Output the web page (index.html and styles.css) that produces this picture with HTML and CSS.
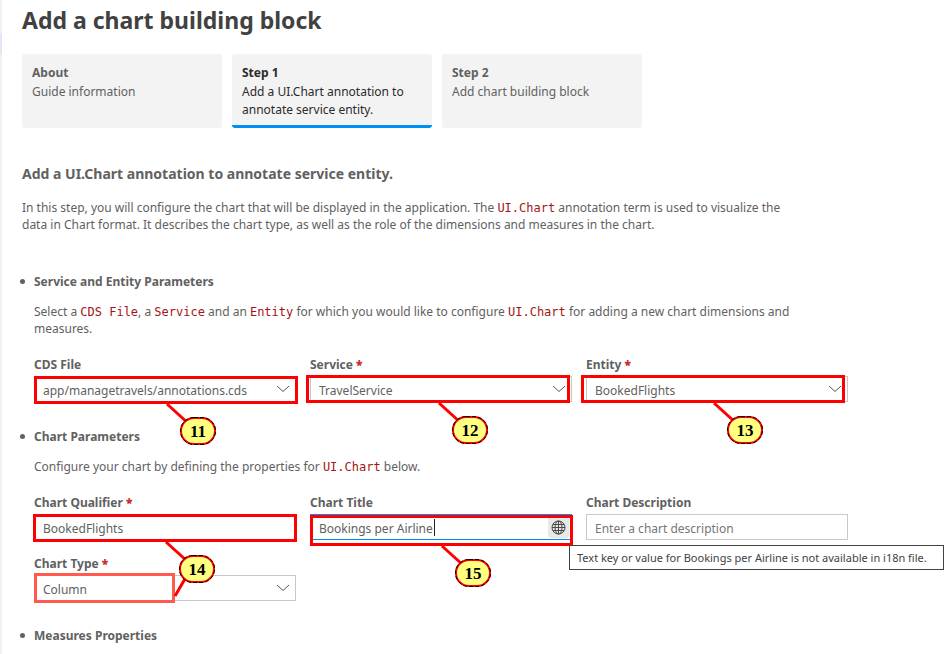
FILE: index.html
```html
<!DOCTYPE html>
<html lang="en">
<head>
<meta charset="utf-8">
<title>Add a chart building block</title>
<link rel="stylesheet" href="styles.css">
</head>
<body>
<main class="guide">
  <h1>Add a chart building block</h1>
  <nav class="steps" aria-label="Guide steps">
    <a class="step" href="#about"><strong>About</strong><span>Guide information</span></a>
    <a class="step step-active" href="#step1" aria-current="step"><strong>Step 1</strong><span>Add a UI.Chart annotation to annotate service entity.</span></a>
    <a class="step" href="#step2"><strong>Step 2</strong><span>Add chart building block</span></a>
  </nav>
  <h2>Add a UI.Chart annotation to annotate service entity.</h2>
  <p class="intro">In this step, you will configure the chart that will be displayed in the application. The <code>UI.Chart</code> annotation term is used to visualize the data in Chart format. It describes the chart type, as well as the role of the dimensions and measures in the chart.</p>

  <ul class="sections">
    <li class="section">
      <h3>Service and Entity Parameters</h3>
      <p>Select a <code>CDS File</code>, a <code>Service</code> and an <code>Entity</code> for which you would like to configure <code>UI.Chart</code> for adding a new chart dimensions and measures.</p>
      <div class="fields">
        <div class="field">
          <label for="cds">CDS File</label>
          <div class="control">
            <select id="cds"><option>app/managetravels/annotations.cds</option></select>
            <svg class="chevron" viewBox="0 0 14 8"><path d="M1 1l6 5.5L13 1"/></svg>
            <svg class="callout" viewBox="0 0 262 26">
              <rect class="frame" x="1.500" y="1.500" width="261" height="25"/>
              <path class="leader" d="M133 28l22 20"/>
              <rect class="badge" x="147" y="42" width="34" height="26" rx="13"/>
              <rect class="badge-dash" x="146.500" y="41.500" width="35" height="27" rx="13.500"/>
              <text x="164" y="61">11</text>
            </svg>
          </div>
        </div>
        <div class="field">
          <label for="service">Service <b>*</b></label>
          <div class="control">
            <select id="service"><option>TravelService</option></select>
            <svg class="chevron" viewBox="0 0 14 8"><path d="M1 1l6 5.5L13 1"/></svg>
            <svg class="callout" viewBox="0 0 262 26">
              <rect class="frame" x="-2.500" y="0.500" width="261" height="25"/>
              <path class="leader" d="M129 27l22 20"/>
              <rect class="badge" x="143" y="41" width="34" height="26" rx="13"/>
              <rect class="badge-dash" x="142.500" y="40.500" width="35" height="27" rx="13.500"/>
              <text x="160" y="60">12</text>
            </svg>
          </div>
        </div>
        <div class="field">
          <label for="entity">Entity <b>*</b></label>
          <div class="control">
            <select id="entity"><option>BookedFlights</option></select>
            <svg class="chevron" viewBox="0 0 14 8"><path d="M1 1l6 5.5L13 1"/></svg>
            <svg class="callout" viewBox="0 0 262 26">
              <rect class="frame" x="-3.500" y="0.500" width="261" height="25"/>
              <path class="leader" d="M128 27l22 20"/>
              <rect class="badge" x="142" y="41" width="34" height="26" rx="13"/>
              <rect class="badge-dash" x="141.500" y="40.500" width="35" height="27" rx="13.500"/>
              <text x="159" y="60">13</text>
            </svg>
          </div>
        </div>
      </div>
    </li>

    <li class="section">
      <h3>Chart Parameters</h3>
      <p>Configure your chart by defining the properties for <code>UI.Chart</code> below.</p>
      <div class="fields">
        <div class="field">
          <label for="qualifier">Chart Qualifier <b>*</b></label>
          <div class="control">
            <input id="qualifier" type="text" value="BookedFlights">
            <svg class="callout" viewBox="0 0 262 26">
              <rect class="frame" x="0.500" y="1.500" width="261" height="25"/>
              <path class="leader" d="M132 28l21 19M141 82l14-24"/>
              <rect class="badge" x="146" y="42" width="34" height="26" rx="13"/>
              <rect class="badge-dash" x="145.500" y="41.500" width="35" height="27" rx="13.500"/>
              <text x="163" y="61">14</text>
            </svg>
          </div>
        </div>
        <div class="field">
          <label for="title">Chart Title</label>
          <div class="control control-focus">
            <input id="title" type="text" value="Bookings per Airline">
            <span class="caret"></span>
            <button class="globe" type="button" aria-label="Translate">
              <svg viewBox="0 0 15 15"><circle cx="7.500" cy="7.500" r="6.500"/><ellipse cx="7.500" cy="7.500" rx="3.500" ry="6.500"/><path d="M7.500 1v13M1 7.500h13M2 4.500h11M2 10.500h11"/></svg>
            </button>
            <svg class="callout" viewBox="0 0 262 26">
              <rect class="frame" x="1.500" y="2.500" width="260" height="28"/>
              <path class="leader" d="M132 32l21 19"/>
              <rect class="badge" x="146" y="46" width="34" height="26" rx="13"/>
              <rect class="badge-dash" x="145.500" y="45.500" width="35" height="27" rx="13.500"/>
              <text x="163" y="65">15</text>
            </svg>
            <div class="tooltip" role="tooltip">Text key or value for Bookings per Airline is not available in i18n file.</div>
          </div>
        </div>
        <div class="field">
          <label for="description">Chart Description</label>
          <div class="control"><input id="description" type="text" placeholder="Enter a chart description"></div>
        </div>
        <div class="field">
          <label for="type">Chart Type <b>*</b></label>
          <div class="control">
            <select id="type"><option>Column</option></select>
            <svg class="chevron" viewBox="0 0 14 8"><path d="M1 1l6 5.500L13 1"/></svg>
            <svg class="callout callout-under" viewBox="0 0 262 26">
              <rect class="frame frame-soft" x="1.500" y="-0.500" width="138" height="27"/>
            </svg>
          </div>
        </div>
      </div>
    </li>

    <li class="section">
      <h3>Measures Properties</h3>
    </li>
  </ul>
</main>
</body>
</html>
```

FILE: styles.css
```css
* {
  box-sizing: border-box;
}

html {
  overflow: hidden;
}

body {
  margin: 0;
  background: #fff;
  color: #616161;
  font: 12px/17px "Noto Sans", "Open Sans", sans-serif;
}

.guide {
  position: relative;
  min-height: 100vh;
  padding: 3px 20px 0;
  border-left: 2px solid #f2f2f2;
}

.guide::before {
  position: absolute;
  top: 33px;
  left: -2px;
  width: 2px;
  height: 22px;
  background: #e4e6f6;
  content: "";
}

h1, h2, h3, p, ul {
  margin: 0;
}

h1 {
  color: #414141;
  font-size: 23px;
  line-height: 34px;
}

.steps {
  display: flex;
  gap: 10px;
  margin-top: 17px;
}

.step {
  display: flex;
  flex-direction: column;
  width: 200px;
  min-height: 74px;
  padding: 10px 10px 6px;
  border-bottom: 3px solid #f3f3f3;
  border-radius: 3px;
  background: #f3f3f3;
  color: #616161;
  line-height: 18px;
  text-decoration: none;
}

.step strong {
  margin-bottom: 1px;
}

.step-active {
  border-bottom-color: #0090f1;
  color: #2b2b2b;
}

h2 {
  margin-top: 36px;
  font-size: 14px;
  line-height: 20px;
}

.intro {
  max-width: 776px;
  margin-top: 15px;
}

code {
  color: #a31515;
  font: 12px/16px "DejaVu Sans Mono", monospace;
}

.sections {
  padding: 0;
  margin-top: 40px;
  list-style: none;
}

.section {
  position: relative;
  padding-left: 12px;
  margin-bottom: 26px;
}

.section::before {
  position: absolute;
  top: 6px;
  left: -2px;
  width: 5px;
  height: 5px;
  border-radius: 50%;
  background: #616161;
  content: "";
}

h3 {
  font-size: 12px;
  line-height: 17px;
}

.section p {
  max-width: 776px;
  margin-top: 13px;
}

.fields {
  display: grid;
  grid-template-columns: repeat(3, minmax(0, 262px));
  gap: 15px 14px;
  margin-top: 19px;
}

.field {
  display: flex;
  flex-direction: column;
  gap: 3px;
}

.field label {
  font-weight: bold;
}

.field b {
  color: #c72e2e;
}

.control {
  position: relative;
  height: 26px;
}

input, select {
  width: 100%;
  height: 26px;
  padding: 2px 8px 0;
  border: 1px solid #c8c8c8;
  border-radius: 0;
  outline: 0;
  background: #fff;
  color: #616161;
  font: inherit;
  appearance: none;
}

input::placeholder {
  color: #767676;
}

.control-focus input {
  border-color: #0090f1;
}

.chevron {
  position: absolute;
  top: 9px;
  right: 6px;
  width: 14px;
  height: 8px;
  fill: none;
  stroke: #555;
  pointer-events: none;
}

.caret {
  position: absolute;
  top: 5px;
  left: 124px;
  width: 1px;
  height: 17px;
  background: #222;
  pointer-events: none;
}

.globe {
  position: absolute;
  top: 3px;
  right: 3px;
  display: grid;
  place-items: center;
  width: 21px;
  height: 21px;
  padding: 0;
  border: 0;
  border-radius: 3px;
  background: #e8e8e8;
}

.globe svg {
  width: 15px;
  height: 15px;
  fill: none;
  stroke: #4a4a4a;
}

.callout {
  position: absolute;
  z-index: 2;
  top: 0;
  left: 0;
  width: 262px;
  height: 26px;
  overflow: visible;
  pointer-events: none;
}

.callout-under {
  z-index: 1;
}

.frame {
  fill: none;
  stroke: #f00;
  stroke-width: 3px;
}

.frame-soft {
  stroke: #ff5a4d;
}

.leader {
  fill: none;
  stroke: #f00;
  stroke-width: 3px;
}

.badge {
  fill: #ffff80;
  stroke: #f00;
  stroke-width: 2px;
}

.badge-dash {
  fill: none;
  stroke: #000;
  stroke-width: 1px;
  stroke-dasharray: 4 2;
}

.callout text {
  fill: #000;
  font: bold 17px "Liberation Serif", serif;
  text-anchor: middle;
}

.tooltip {
  position: absolute;
  z-index: 3;
  top: 31px;
  left: 259px;
  padding: 3px 16px 3px 7px;
  border: 1px solid #424242;
  background: #fff;
  color: #424242;
  font-size: 11px;
  white-space: nowrap;
}
```
